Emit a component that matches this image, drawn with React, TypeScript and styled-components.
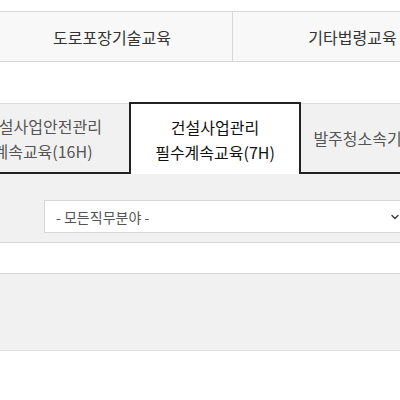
import * as React from "react";
import styled, { createGlobalStyle } from "styled-components";
import { ChevronDown } from "lucide-react";

const GlobalStyle = createGlobalStyle`
  html, body {
    margin: 0;
    padding: 0;
    background: #fff;
  }
  body {
    font-family: "Noto Sans CJK KR", "Noto Sans", sans-serif;
    overflow: hidden;
  }
`;

const Page = styled.div`
  width: 400px;
  height: 400px;
  overflow: hidden;
  padding-top: 11px;
  box-sizing: border-box;
`;

const CategoryBar = styled.div`
  display: flex;
  margin-left: -8px;
  width: 960px;
  background: #f8f8f8;
  border-top: 1px solid #d8d8d8;
  border-bottom: 1px solid #d8d8d8;
`;

const CategoryItem = styled.div`
  flex: 0 0 240px;
  height: 49px;
  display: flex;
  align-items: center;
  justify-content: center;
  font-size: 16px;
  color: #333;
  box-sizing: border-box;
  & + & {
    border-left: 1px solid #d8d8d8;
  }
`;

const CourseTabs = styled.div`
  display: flex;
  margin-top: 40px;
  margin-left: -43px;
  width: 860px;
  height: 72px;
`;

const CourseTab = styled.div<{ $active?: boolean }>`
  flex: 0 0 172px;
  box-sizing: border-box;
  display: flex;
  align-items: center;
  justify-content: center;
  text-align: center;
  font-size: 16px;
  line-height: 25px;
  padding-top: 1px;
  color: ${(p) => (p.$active ? "#111" : "#555")};
  background: ${(p) => (p.$active ? "#fff" : "#f1f1f1")};
  ${(p) =>
    p.$active
      ? `
    border: 2px solid #222;
    border-bottom: 0;
  `
      : `
    margin-top: 1px;
    border-top: 1px solid #dcdcdc;
    border-bottom: 2px solid #222;
  `}
`;

const FilterPanel = styled.div`
  background: #f1f1f1;
  padding: 26px 0 9px 44px;
  border-bottom: 1px solid #d8d8d8;
`;

const SelectBox = styled.div`
  width: 372px;
  height: 33px;
  box-sizing: border-box;
  background: #fff;
  border: 1px solid #d6d6d6;
  display: flex;
  align-items: center;
  justify-content: space-between;
  padding: 0 14px 0 11px;
  font-size: 14px;
  color: #555;
`;

const ResultBox = styled.div`
  margin-top: 30px;
  height: 78px;
  box-sizing: border-box;
  background: #f1f1f1;
  border-top: 1px solid #d6d6d6;
  border-bottom: 1px solid #e2e2e2;
`;

const categories = ["도로포장기술교육", "기타법령교육", "", ""];

const courses = [
  { label: ["건설사업안전관리", "계속교육(16H)"] },
  { label: ["건설사업관리", "필수계속교육(7H)"], active: true },
  { label: ["발주청소속기술인교육"] },
];

export default function App() {
  return (
    <>
      <GlobalStyle />
      <Page>
        <CategoryBar>
          {categories.map((c, i) => (
            <CategoryItem key={i}>{c}</CategoryItem>
          ))}
        </CategoryBar>
        <CourseTabs>
          {courses.map((c, i) => (
            <CourseTab key={i} $active={c.active}>
              <div>
                {c.label.map((l) => (
                  <div key={l}>{l}</div>
                ))}
              </div>
            </CourseTab>
          ))}
        </CourseTabs>
        <FilterPanel>
          <SelectBox>
            <span>- 모든직무분야 -</span>
            <ChevronDown size={12} strokeWidth={3} color="#444" />
          </SelectBox>
        </FilterPanel>
        <ResultBox />
      </Page>
    </>
  );
}
